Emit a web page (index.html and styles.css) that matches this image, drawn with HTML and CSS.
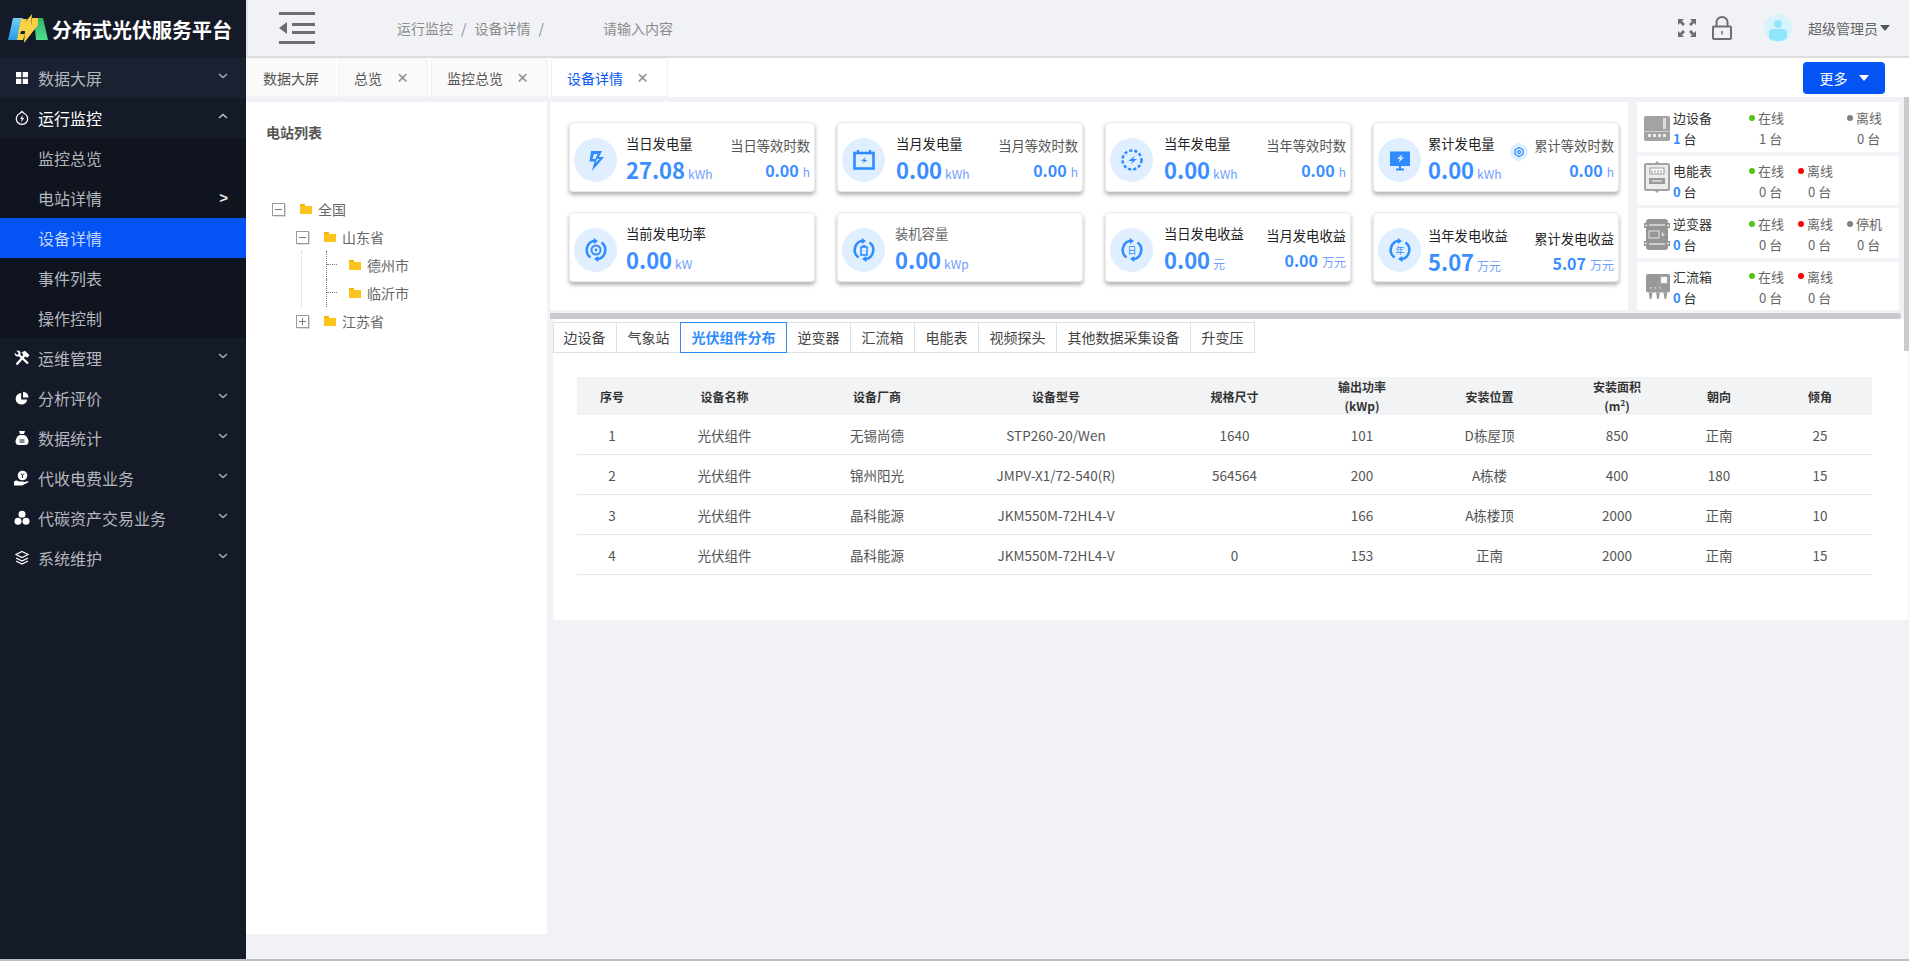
FILE: index.html
```html
<!DOCTYPE html>
<html lang="zh-CN">
<head>
    <meta charset="UTF-8">
    <title>分布式光伏服务平台</title>
    <link rel="stylesheet" href="styles.css">
</head>
<body>
<div class="app">

    <!-- Sidebar -->
    <aside class="sidebar">
        <div class="logo">
            <svg class="logo-icon" viewBox="0 0 40 30">
                <defs>
                    <linearGradient id="logoBlue" x1="0" y1="0" x2="0" y2="1"><stop offset="0" stop-color="#6fd0f5"/><stop offset="1" stop-color="#2b9be8"/></linearGradient>
                    <linearGradient id="logoGreen" x1="0" y1="0" x2="0" y2="1"><stop offset="0" stop-color="#2fb46a"/><stop offset="1" stop-color="#4fe08c"/></linearGradient>
                </defs>
                <polygon points="5,4 15,4 10,26 0,26" fill="url(#logoBlue)"/>
                <polygon points="26,4 35,4 40,26 28,26" fill="url(#logoGreen)"/>
                <polygon points="13,5 19,5 12,20 17,20 15,26 9,26" fill="#f7cf3f"/>
                <polygon points="24,0 10,17 17,17 16,29 30,11 23,11" fill="#f9d24a"/>
                <polygon points="24,4 30,4 30,11 23,11" fill="#f7cf3f"/>
            </svg>
            <span>分布式光伏服务平台</span>
        </div>
        <div class="menu-item first">
            <svg class="menu-icon" viewBox="0 0 16 16"><path d="M2 2h5.300v5.300H2zM8.700 2H14v5.300H8.700zM2 8.700h5.300V14H2zM8.700 8.700H14V14H8.700z" fill="#fff"/></svg>
            <span>数据大屏</span>
            <svg class="chevron" viewBox="0 0 10 6"><path d="M1 1l4 3.500L9 1" fill="none" stroke="#a9adb5" stroke-width="1.500"/></svg>
        </div>
        <div class="menu-item open">
            <svg class="menu-icon" viewBox="0 0 16 16"><path d="M8 1.500l2.200 2a5.700 5.700 0 1 1-4.400 0z" fill="none" stroke="#fff" stroke-width="1.300"/><path d="M9 4.800L6 9h1.800L7 12.500 10.200 8H8.300z" fill="#fff"/></svg>
            <span>运行监控</span>
            <svg class="chevron" viewBox="0 0 10 6"><path d="M1 5l4-3.500L9 5" fill="none" stroke="#c5c8ce" stroke-width="1.500"/></svg>
        </div>
        <div class="submenu">
            <div class="submenu-item">监控总览</div>
            <div class="submenu-item">电站详情<b class="sub-arrow">&gt;</b></div>
            <div class="submenu-item active">设备详情</div>
            <div class="submenu-item">事件列表</div>
            <div class="submenu-item">操作控制</div>
        </div>
        <div class="menu-item">
            <svg class="menu-icon" viewBox="0 0 16 16"><path d="M2.500 14.500L11 5" stroke="#fff" stroke-width="2.400" fill="none"/><path d="M7.500 2.500L11 .8l4.500 4.400-2.300 2.600-1.700-1.600-1 .8-2-2 .8-.8z" fill="#fff"/><path d="M5 5l9 8.500" stroke="#fff" stroke-width="2.400" fill="none"/><path d="M.8 2.800L3 5l1.800-1.800L2.600 1C4.300 0 6 .8 6.500 2.500c.3 1 0 2-.7 2.900-1 1-2.400 1.300-3.500.8C1 5.600.3 4.200.8 2.800z" fill="#fff"/></svg>
            <span>运维管理</span>
            <svg class="chevron" viewBox="0 0 10 6"><path d="M1 1l4 3.500L9 1" fill="none" stroke="#a9adb5" stroke-width="1.500"/></svg>
        </div>
        <div class="menu-item">
            <svg class="menu-icon" viewBox="0 0 16 16"><path d="M7.200 3a5.800 5.800 0 1 0 6 6.400H7.200z" fill="#fff"/><path d="M9 1.800a5.800 5.800 0 0 1 5.500 5.800H9z" fill="#fff"/></svg>
            <span>分析评价</span>
            <svg class="chevron" viewBox="0 0 10 6"><path d="M1 1l4 3.500L9 1" fill="none" stroke="#a9adb5" stroke-width="1.500"/></svg>
        </div>
        <div class="menu-item">
            <svg class="menu-icon" viewBox="0 0 16 16"><path d="M5 1h6L10 4H6z" fill="#fff"/><path d="M5.500 5h5c2.500 1.500 4 4 4 6.500 0 2.500-1.500 3.500-3 3.500h-7c-1.500 0-3-1-3-3.500 0-2.500 1.500-5 4-6.500z" fill="#fff"/><path d="M5.500 10h5M5.500 12h5" stroke="#141a27" stroke-width="1"/></svg>
            <span>数据统计</span>
            <svg class="chevron" viewBox="0 0 10 6"><path d="M1 1l4 3.500L9 1" fill="none" stroke="#a9adb5" stroke-width="1.500"/></svg>
        </div>
        <div class="menu-item">
            <svg class="menu-icon" viewBox="0 0 16 16"><circle cx="8.500" cy="5.500" r="4.800" fill="#fff"/><path d="M7 3.500l1.500 2 1.500-2M8.500 5.500v2.500" stroke="#141a27" fill="none"/><path d="M0 11.500c2-1.500 3.500-1 5 0h4c1 0 1 1.300 0 1.300h-2l6.500-1.500c1-.2 1.500.8.500 1.300L8 15.500H0z" fill="#fff"/></svg>
            <span>代收电费业务</span>
            <svg class="chevron" viewBox="0 0 10 6"><path d="M1 1l4 3.500L9 1" fill="none" stroke="#a9adb5" stroke-width="1.500"/></svg>
        </div>
        <div class="menu-item">
            <svg class="menu-icon" viewBox="0 0 16 16"><circle cx="8" cy="4.300" r="3.500" fill="#fff"/><circle cx="4" cy="11.300" r="3.500" fill="#fff"/><circle cx="12" cy="11.300" r="3.500" fill="#fff"/></svg>
            <span>代碳资产交易业务</span>
            <svg class="chevron" viewBox="0 0 10 6"><path d="M1 1l4 3.500L9 1" fill="none" stroke="#a9adb5" stroke-width="1.500"/></svg>
        </div>
        <div class="menu-item">
            <svg class="menu-icon" viewBox="0 0 16 16"><path d="M8 1.500l6 3-6 3-6-3z" fill="none" stroke="#fff" stroke-width="1.200"/><path d="M2 8l6 3 6-3M2 11l6 3 6-3" fill="none" stroke="#fff" stroke-width="1.200"/></svg>
            <span>系统维护</span>
            <svg class="chevron" viewBox="0 0 10 6"><path d="M1 1l4 3.500L9 1" fill="none" stroke="#a9adb5" stroke-width="1.500"/></svg>
        </div>
    </aside>

    <div class="main">

        <!-- Top bar -->
        <header class="topbar">
            <svg class="toggle" viewBox="0 0 36 32"><path d="M0 0h36v3H0zM13 11h23v3H13zM13 19h23v3H13zM0 29h36v3H0z" fill="#6d6d6d"/><path d="M8 10v12l-8-6z" fill="#6d6d6d"/></svg>
            <div class="crumbs">
                <span>运行监控</span><i>/</i><span>设备详情</span><i>/</i>
            </div>
            <span class="search-hint">请输入内容</span>
            <div class="topbar-right">
                <svg class="full-icon" viewBox="0 0 20 20"><path d="M1 1h6L5 3l3 3-2 2-3-3-2 2zM19 1v6l-2-2-3 3-2-2 3-3-2-2zM1 19v-6l2 2 3-3 2 2-3 3 2 2zM19 19h-6l2-2-3-3 2-2 3 3 2-2z" fill="#6f6f6f"/></svg>
                <svg class="lock-icon" viewBox="0 0 20 24"><path d="M4.500 11V6a5.500 5 0 0 1 11 0v5" fill="none" stroke="#6f6f6f" stroke-width="2"/><rect x="1" y="10.500" width="18" height="12.500" rx="1" fill="none" stroke="#6f6f6f" stroke-width="2"/><path d="M10 15v3.500" stroke="#6f6f6f" stroke-width="1.500"/></svg>
                <svg class="avatar" viewBox="0 0 28 28"><circle cx="14" cy="14" r="14" fill="#d8f3fb"/><circle cx="14" cy="10" r="4" fill="#90e6fd"/><path d="M5 24v-5c0-3 2-4 4-4h10c2 0 4 1 4 4v5a14 14 0 0 1-18 0z" fill="#90e6fd"/></svg>
                <span class="user">超级管理员</span>
                <i class="caret"></i>
            </div>
        </header>

        <!-- Tabs -->
        <nav class="tabs">
            <div class="tab first-tab">数据大屏</div>
            <div class="tab">总览<span class="close">×</span></div>
            <div class="tab">监控总览<span class="close">×</span></div>
            <div class="tab current">设备详情<span class="close">×</span></div>
            <button class="more">更多<i class="more-caret"></i></button>
        </nav>

        <div class="content">

            <!-- Station tree -->
            <section class="tree-panel">
                <h4>电站列表</h4>
                <ul class="tree">
                    <li>
                        <div class="node"><i class="box minus"></i><i class="folder"></i><span>全国</span></div>
                        <ul class="level">
                            <li>
                                <div class="node"><i class="box minus"></i><i class="folder"></i><span>山东省</span></div>
                                <ul class="leafs">
                                    <li class="leaf"><i class="folder"></i><span>德州市</span></li>
                                    <li class="leaf"><i class="folder"></i><span>临沂市</span></li>
                                </ul>
                            </li>
                            <li>
                                <div class="node"><i class="box plus"></i><i class="folder"></i><span>江苏省</span></div>
                            </li>
                        </ul>
                    </li>
                </ul>
            </section>

            <div class="detail">
                <div class="detail-top">

                    <!-- Stat cards -->
                    <section class="stats">
                        <div class="card">
                            <div class="round">
                                <svg viewBox="0 0 24 24"><path d="M7 3h11l-3 6h5L8 23l2.500-9.500H5.500z" fill="#2f8cff"/><path d="M10 6l-1.500 5h4.500l-1.500 4 4-4h-4l2-5z" fill="#e0efff"/></svg>
                            </div>
                            <div class="stat-main"><p class="stat-title">当日发电量</p><p class="stat-value">27.08<small>kWh</small></p></div>
                            <div class="stat-side"><p class="side-title">当日等效时数</p><p class="side-value">0.00<small>h</small></p></div>
                        </div>
                        <div class="card">
                            <div class="round">
                                <svg viewBox="0 0 24 24"><rect x="2.500" y="5" width="19" height="15.500" fill="none" stroke="#2f8cff" stroke-width="2.600"/><path d="M6 2v3M18 2v3" stroke="#2f8cff" stroke-width="2.200"/><path d="M14 9l-5 4h3l-1.500 2.500 5-3.500h-3z" fill="#2f8cff"/></svg>
                            </div>
                            <div class="stat-main wide"><p class="stat-title">当月发电量</p><p class="stat-value">0.00<small>kWh</small></p></div>
                            <div class="stat-side"><p class="side-title">当月等效时数</p><p class="side-value">0.00<small>h</small></p></div>
                        </div>
                        <div class="card">
                            <div class="round">
                                <svg viewBox="0 0 24 24"><circle cx="12" cy="12" r="9.500" fill="none" stroke="#2f8cff" stroke-width="2.500" stroke-dasharray="3.200 2"/><path d="M15 7.500l-6.500 5.500h4l-2 3.500 6.500-5.500h-4z" fill="#2f8cff"/></svg>
                            </div>
                            <div class="stat-main wide"><p class="stat-title">当年发电量</p><p class="stat-value">0.00<small>kWh</small></p></div>
                            <div class="stat-side"><p class="side-title">当年等效时数</p><p class="side-value">0.00<small>h</small></p></div>
                        </div>
                        <div class="card">
                            <div class="round">
                                <svg viewBox="0 0 24 24"><rect x="2" y="3.500" width="20" height="14.500" fill="#2f8cff"/><path d="M8 21.500h8M12 18v3.500" stroke="#2f8cff" stroke-width="2.200"/><path d="M14.500 6l-5.500 5h3l-1.500 3.500 5.500-5h-3z" fill="#e0efff"/></svg>
                            </div>
                            <div class="stat-main tight"><p class="stat-title">累计发电量</p><p class="stat-value">0.00<small>kWh</small></p></div>
                            <div class="round mini">
                                <svg viewBox="0 0 24 24"><path d="M12 3l8 4.500v9L12 21l-8-4.500v-9z" fill="none" stroke="#2f8cff" stroke-width="2.500"/><circle cx="12" cy="12" r="3" fill="none" stroke="#2f8cff" stroke-width="2.500"/></svg>
                            </div>
                            <div class="stat-side"><p class="side-title">累计等效时数</p><p class="side-value">0.00<small>h</small></p></div>
                        </div>
                        <div class="card">
                            <div class="round">
                                <svg viewBox="0 0 24 24"><path d="M12 2.800A9.200 9.200 0 0 0 6.500 19.400M12 21.200A9.200 9.200 0 0 0 17.500 4.600" fill="none" stroke="#2f8cff" stroke-width="2.500"/><path d="M9.500 0l4.500 3-4 3zM14.500 24L10 21l4-3z" fill="#2f8cff"/><circle cx="12" cy="12" r="4.500" fill="none" stroke="#2f8cff" stroke-width="2"/><circle cx="12" cy="12" r="1.400" fill="#2f8cff"/></svg>
                            </div>
                            <div class="stat-main"><p class="stat-title">当前发电功率</p><p class="stat-value">0.00<small>kW</small></p></div>
                        </div>
                        <div class="card">
                            <div class="round">
                                <svg viewBox="0 0 24 24"><path d="M12 2.800A9.200 9.200 0 0 0 6.500 19.400M12 21.200A9.200 9.200 0 0 0 17.500 4.600" fill="none" stroke="#2f8cff" stroke-width="2.500"/><path d="M9.500 0l4.500 3-4 3zM14.500 24L10 21l4-3z" fill="#2f8cff"/><rect x="9" y="9" width="6" height="8" fill="none" stroke="#2f8cff" stroke-width="1.600"/><path d="M10.500 7h3v2h-3z" fill="#2f8cff"/></svg>
                            </div>
                            <div class="stat-main shifted"><p class="stat-title muted">装机容量</p><p class="stat-value">0.00<small>kWp</small></p></div>
                        </div>
                        <div class="card">
                            <div class="round">
                                <svg viewBox="0 0 24 24"><path d="M12 2.800A9.200 9.200 0 0 0 6.500 19.400M12 21.200A9.200 9.200 0 0 0 17.500 4.600" fill="none" stroke="#2f8cff" stroke-width="2.500"/><path d="M9.500 0l4.500 3-4 3zM14.500 24L10 21l4-3z" fill="#2f8cff"/><text x="12" y="15.500" class="icon-text">日</text></svg>
                            </div>
                            <div class="stat-main wide"><p class="stat-title">当日发电收益</p><p class="stat-value">0.00<small>元</small></p></div>
                            <div class="stat-side"><p class="side-title dark">当月发电收益</p><p class="side-value">0.00<small>万元</small></p></div>
                        </div>
                        <div class="card">
                            <div class="round">
                                <svg viewBox="0 0 24 24"><path d="M12 2.800A9.200 9.200 0 0 0 6.500 19.400M12 21.200A9.200 9.200 0 0 0 17.500 4.600" fill="none" stroke="#2f8cff" stroke-width="2.500"/><path d="M9.500 0l4.500 3-4 3zM14.500 24L10 21l4-3z" fill="#2f8cff"/><text x="12" y="15.500" class="icon-text">年</text></svg>
                            </div>
                            <div class="stat-main tight lower"><p class="stat-title">当年发电收益</p><p class="stat-value">5.07<small>万元</small></p></div>
                            <div class="stat-side lowest"><p class="side-title dark">累计发电收益</p><p class="side-value">5.07<small>万元</small></p></div>
                        </div>
                    </section>

                    <!-- Device counts -->
                    <section class="devices">
                        <div class="device">
                            <svg class="device-icon" viewBox="0 0 26 25"><rect x="0" y="0" width="26" height="25" rx="2" fill="#a3a3a3"/><rect x="0" y="15" width="26" height="1" fill="#cfcfcf"/><rect x="19" y="2" width="3" height="11" fill="#dcdcdc"/><path d="M4 18h3v3H4zM9 18h3v3H9zM14 18h3v3h-3zM19 18h3v3h-3z" fill="#ececec"/></svg>
                            <div class="device-name"><p>边设备</p><p><b>1</b> 台</p></div>
                            <div class="state"><p><i class="dot green"></i>在线</p><p class="num">1 台</p></div>
                            <div class="state"></div>
                            <div class="state"><p><i class="dot gray"></i>离线</p><p class="num">0 台</p></div>
                        </div>
                        <div class="device">
                            <svg class="device-icon meter" viewBox="0 0 26 32"><path d="M13 0l3 3h-6zM10 29h6l-3 3z" fill="#a3a3a3"/><rect x="1" y="3" width="24" height="26" rx="1" fill="#ececec" stroke="#a3a3a3" stroke-width="2"/><rect x="6" y="7" width="14" height="6" fill="#fff" stroke="#999"/><path d="M8 9v3M11 9v3M14 9v3M17 9v3" stroke="#999"/><path d="M5 17h16v6H5z" fill="#999"/><path d="M8 20h10" stroke="#fff"/></svg>
                            <div class="device-name"><p>电能表</p><p><b>0</b> 台</p></div>
                            <div class="state"><p><i class="dot green"></i>在线</p><p class="num">0 台</p></div>
                            <div class="state"><p><i class="dot red"></i>离线</p><p class="num">0 台</p></div>
                            <div class="state"></div>
                        </div>
                        <div class="device">
                            <svg class="device-icon" viewBox="0 0 26 33"><rect x="2" y="1" width="22" height="31" rx="3" fill="#959595"/><path d="M0 5h4v5H0zM22 5h4v5h-4zM0 23h4v5H0zM22 23h4v5h-4z" fill="#959595"/><circle cx="2" cy="7.500" r="1" fill="#eee"/><circle cx="24" cy="7.500" r="1" fill="#eee"/><circle cx="2" cy="25.500" r="1" fill="#eee"/><circle cx="24" cy="25.500" r="1" fill="#eee"/><rect x="5" y="6" width="16" height="2" fill="#cdcdcd"/><rect x="5" y="25" width="16" height="2" fill="#cdcdcd"/><rect x="5" y="13" width="10" height="7" fill="none" stroke="#e6e6e6"/><path d="M19 13l-2 4h2l-1 3 3-4h-2z" fill="#e6e6e6"/></svg>
                            <div class="device-name"><p>逆变器</p><p><b>0</b> 台</p></div>
                            <div class="state"><p><i class="dot green"></i>在线</p><p class="num">0 台</p></div>
                            <div class="state"><p><i class="dot red"></i>离线</p><p class="num">0 台</p></div>
                            <div class="state"><p><i class="dot gray"></i>停机</p><p class="num">0 台</p></div>
                        </div>
                        <div class="device">
                            <svg class="device-icon box-icon" viewBox="0 0 26 28"><rect x="0" y="0" width="26" height="20" rx="2" fill="#999"/><rect x="16" y="3" width="7" height="7" fill="#f6f6f6"/><path d="M4 15h2M9 15h2M14 15h2" stroke="#dcdcdc" stroke-width="1.500"/><path d="M3 20h4l-1 7H4zM11 20h4l-1 7h-2zM19 20h4l-1 7h-2z" fill="#999"/></svg>
                            <div class="device-name"><p>汇流箱</p><p><b>0</b> 台</p></div>
                            <div class="state"><p><i class="dot green"></i>在线</p><p class="num">0 台</p></div>
                            <div class="state"><p><i class="dot red"></i>离线</p><p class="num">0 台</p></div>
                            <div class="state"></div>
                        </div>
                    </section>
                </div>

                <div class="hbar"></div>

                <!-- Device tabs and table -->
                <section class="device-panel">
                    <div class="kinds">
                        <div class="kind">边设备</div>
                        <div class="kind">气象站</div>
                        <div class="kind selected">光伏组件分布</div>
                        <div class="kind">逆变器</div>
                        <div class="kind">汇流箱</div>
                        <div class="kind">电能表</div>
                        <div class="kind">视频探头</div>
                        <div class="kind">其他数据采集设备</div>
                        <div class="kind">升变压</div>
                    </div>
                    <table class="device-table">
                        <thead>
                            <tr>
                                <th>序号</th><th>设备名称</th><th>设备厂商</th><th>设备型号</th><th>规格尺寸</th>
                                <th>输出功率<br>(kWp)</th><th>安装位置</th><th>安装面积<br>(m<sup>2</sup>)</th><th>朝向</th><th>倾角</th>
                            </tr>
                        </thead>
                        <tbody>
                            <tr><td>1</td><td>光伏组件</td><td>无锡尚德</td><td>STP260-20/Wen</td><td>1640</td><td>101</td><td>D栋屋顶</td><td>850</td><td>正南</td><td>25</td></tr>
                            <tr><td>2</td><td>光伏组件</td><td>锦州阳光</td><td>JMPV-X1/72-540(R)</td><td>564564</td><td>200</td><td>A栋楼</td><td>400</td><td>180</td><td>15</td></tr>
                            <tr><td>3</td><td>光伏组件</td><td>晶科能源</td><td>JKM550M-72HL4-V</td><td></td><td>166</td><td>A栋楼顶</td><td>2000</td><td>正南</td><td>10</td></tr>
                            <tr><td>4</td><td>光伏组件</td><td>晶科能源</td><td>JKM550M-72HL4-V</td><td>0</td><td>153</td><td>正南</td><td>2000</td><td>正南</td><td>15</td></tr>
                        </tbody>
                    </table>
                </section>
            </div>

            <div class="vbar"></div>
        </div>
    </div>
</div>
</body>
</html>
```

FILE: styles.css
```css
* {
    box-sizing: border-box;
}
html, body {
    margin: 0;
    height: 961px;
    overflow: hidden;
}
body {
    font-family: "Noto Sans CJK SC", "Noto Sans", sans-serif;
    font-size: 14px;
    color: #555;
    background-color: #f0f2f5;
}
p, ul, h4 {
    margin: 0;
    padding: 0;
}
ul {
    list-style: none;
}
i {
    font-style: normal;
}
.app {
    display: flex;
    height: 961px;
    border-bottom: 2px solid #b9bcc0;
}

/* sidebar */
.sidebar {
    width: 246px;
    flex: none;
    background-color: #141a27;
    color: #b4b7bd;
    font-size: 16px;
}
.logo {
    height: 58px;
    display: flex;
    align-items: center;
    padding-left: 8px;
    color: #fff;
    font-size: 20px;
    font-weight: bold;
}
.logo-icon {
    width: 40px;
    height: 30px;
    margin-right: 4px;
}
.menu-item {
    height: 40px;
    display: flex;
    align-items: center;
    padding-left: 14px;
    line-height: 40px;
}
.menu-item.first {
    background-color: #1a2130;
}
.menu-item.open {
    color: #fff;
}
.menu-icon {
    width: 16px;
    height: 16px;
    margin-right: 8px;
}
.chevron {
    width: 10px;
    height: 6px;
    margin-left: auto;
    margin-right: 18px;
    margin-top: -4px;
}
.submenu {
    background-color: #0f141f;
}
.submenu-item {
    height: 40px;
    line-height: 40px;
    padding-left: 38px;
    padding-right: 18px;
    display: flex;
    justify-content: space-between;
}
.submenu-item.active {
    background-color: #0353f5;
    color: #c3d6ff;
}
.sub-arrow {
    color: #e8e8e8;
    font-family: "Liberation Sans", sans-serif;
    font-size: 15px;
}

/* top bar */
.main {
    flex: 1;
    min-width: 0;
    display: flex;
    flex-direction: column;
}
.topbar {
    height: 58px;
    flex: none;
    display: flex;
    align-items: center;
    border-bottom: 2px solid #dcdcdc;
    border-left: 2px solid #e3e3e3;
    padding-left: 31px;
    color: #8c8c8c;
}
.toggle {
    width: 36px;
    height: 32px;
}
.crumbs {
    margin-left: 82px;
    display: flex;
    width: 206px;
}
.crumbs i {
    margin: 0 8px;
}
.search-hint {
    color: #8c8c8c;
}
.topbar-right {
    margin-left: auto;
    display: flex;
    align-items: center;
    color: #666;
    padding-right: 19px;
}
.full-icon {
    width: 20px;
    height: 20px;
}
.lock-icon {
    width: 20px;
    height: 24px;
    margin-left: 15px;
}
.avatar {
    width: 28px;
    height: 28px;
    margin-left: 32px;
}
.user {
    margin-left: 16px;
}
.caret {
    border-left: 5.5px solid transparent;
    border-right: 5.5px solid transparent;
    border-top: 6px solid #555;
    margin-left: 2px;
}

/* page tabs */
.tabs {
    height: 39px;
    flex: none;
    display: flex;
    background-color: #fff;
    padding-right: 24px;
    align-items: stretch;
}
.tab {
    background-color: #fafafa;
    margin-right: 3px;
    border-radius: 3px 3px 0 0;
    padding: 0 20px 0 16px;
    display: flex;
    align-items: center;
    width: 90px;
    white-space: nowrap;
    box-shadow: inset 0 0 0 1px #f2f2f2;
}
.tab:nth-child(3) {
    width: 117px;
}
.tab:nth-child(4) {
    width: 117px;
    background-color: #fff;
    color: #0a58f0;
}
.close {
    color: #8a8a8a;
    font-size: 19px;
    font-weight: 300;
    margin-left: auto;
    line-height: 20px;
    font-family: "Liberation Sans", sans-serif;
}
.first-tab {
    width: 89px;
    padding: 0 0 0 17px;
}
.more {
    margin: 4px 0 3px auto;
    width: 82px;
    background-color: #0353f5;
    border: none;
    border-radius: 4px;
    color: #fff;
    font-size: 14px;
    font-family: inherit;
    display: flex;
    align-items: center;
    justify-content: center;
}
.more-caret {
    border-left: 5px solid transparent;
    border-right: 5px solid transparent;
    border-top: 6px solid #fff;
    margin-left: 11px;
}

.content {
    flex: 1;
    display: flex;
    padding-top: 5px;
    position: relative;
}

/* tree */
.tree-panel {
    width: 301px;
    height: 832px;
    flex: none;
    background-color: #fff;
    padding: 20px 0 0 20px;
}
.tree-panel h4 {
    font-size: 14px;
    line-height: 20px;
    margin-bottom: 53px;
    color: #555;
}
.tree {
    margin-left: 6px;
    color: #666;
    line-height: 28px;
}
.node, .leaf {
    height: 28px;
    display: flex;
    align-items: center;
}
.box {
    width: 13px;
    height: 13px;
    border: 1px solid #9b9b9b;
    box-shadow: 1px 1px 0 #ddd;
    display: flex;
    align-items: center;
    justify-content: center;
    margin-right: 15px;
}
.box::before {
    content: "";
    width: 7px;
    height: 1px;
    background-color: #777;
}
.box.plus {
    background: linear-gradient(#777, #777) center / 1px 7px no-repeat;
}
.folder {
    width: 12px;
    height: 10px;
    margin-right: 6px;
    background: linear-gradient(#f7b500, #f7b500) 0 0 / 5px 2px no-repeat,
                linear-gradient(#fcc31f, #fcc31f) 0 2px / 100% 8px no-repeat;
}
.level {
    margin-left: 24px;
}
.leafs {
    margin-left: 5px;
    padding-left: 24px;
    border-left: 1px dotted #ccc;
}
.leafs .leaf {
    padding-left: 22px;
    border-left: 1px dotted #777;
    position: relative;
}
.leaf::before {
    content: "";
    position: absolute;
    left: 0;
    top: 13px;
    width: 10px;
    border-top: 1px dotted #777;
}

/* stats */
.detail {
    margin-left: 3px;
    width: 1358px;
    flex: none;
}
.detail-top {
    display: flex;
    height: 208px;
}
.stats {
    width: 1078px;
    flex: none;
    background-color: #fff;
    display: grid;
    grid-template-columns: repeat(4, 246px);
    grid-auto-rows: 70px;
    gap: 20px 22px;
    padding: 20px 0 0 19px;
}
.card {
    border: 1px solid #eaeaea;
    border-radius: 4px;
    box-shadow: 0 3px 4px rgba(0, 0, 0, .3);
    background-color: #fff;
    display: flex;
    align-items: flex-start;
    padding: 15px 4px 0 4px;
}
.round {
    width: 43px;
    height: 44px;
    flex: none;
    border-radius: 50%;
    background-color: #e0efff;
    display: flex;
    align-items: center;
    justify-content: center;
}
.round svg {
    width: 24px;
    height: 24px;
}
.round.mini {
    width: 18px;
    height: 18px;
    margin: 5px 0 0 auto;
}
.round.mini svg {
    width: 12px;
    height: 12px;
}
.icon-text {
    font-size: 9px;
    fill: #2f8cff;
    text-anchor: middle;
}
.stat-main {
    margin-left: 9px;
    margin-top: -4px;
}
.stat-main.wide {
    margin-left: 11px;
}
.stat-main.tight {
    margin-left: 7px;
}
.stat-main.shifted {
    margin-left: 10px;
}
.stat-main.lower {
    margin-top: -2px;
}
.stat-title {
    font-size: 13.3px;
    color: #222;
    line-height: 20px;
}
.stat-title.muted {
    color: #666;
}
.stat-value {
    font-size: 22px;
    font-weight: bold;
    color: #3a8eff;
    line-height: 31px;
}
.stat-value small {
    font-size: 12px;
    font-weight: normal;
    color: #6f9dff;
    margin-left: 3px;
}
.stat-side {
    margin-left: auto;
    margin-top: -2px;
    text-align: right;
}
.round.mini + .stat-side {
    margin-left: 6px;
}
.stat-side.lowest {
    margin-top: 1px;
}
.side-title {
    font-size: 13.3px;
    line-height: 20px;
    color: #555;
}
.side-title.dark {
    color: #222;
}
.side-value {
    font-size: 16px;
    font-weight: bold;
    color: #3a8eff;
    line-height: 28px;
}
.side-value small {
    font-size: 12px;
    font-weight: normal;
    color: #6f9dff;
    margin-left: 4px;
}

/* device counts */
.devices {
    margin-left: 9px;
    width: 262px;
    flex: none;
    display: grid;
    grid-template-rows: 50px 49px 50px 48px;
    gap: 3.5px;
}
.device {
    background-color: #fff;
    display: grid;
    grid-template-columns: 26px 79px 49px 49px 1fr;
    align-items: center;
    padding: 2px 0 0 7px;
    font-size: 13px;
    line-height: 21px;
}
.device-icon {
    width: 26px;
    height: auto;
}
.device-icon.meter {
    margin-top: -8px;
}
.box-icon {
    width: 24px;
    margin-left: 2px;
}
.device-name {
    color: #333;
    margin-left: 3px;
}
.device-name b {
    color: #2f8cff;
}
.state p {
    display: flex;
    align-items: center;
    color: #666;
}
.state .num {
    padding-left: 10px;
}
.dot {
    width: 6px;
    height: 6px;
    border-radius: 50%;
    margin-right: 3px;
}
.green {
    background-color: #52c41a;
}
.red {
    background-color: #f5050a;
}
.gray {
    background-color: #808080;
}

.hbar {
    margin: 3px 0 0 0;
    height: 6px;
    width: 1351px;
    background-color: #c8cacf;
    border-radius: 0 3px 3px 0;
}

/* device panel */
.device-panel {
    margin-left: 3px;
    height: 301px;
    background-color: #fff;
    padding: 3px 33px 0 0;
}
.kinds {
    display: flex;
    height: 31px;
    margin-bottom: 24px;
}
.kind {
    padding: 0 10.5px;
    border: 1px solid #dcdfe6;
    border-left: none;
    line-height: 29px;
    color: #444;
    white-space: nowrap;
}
.kind:first-child {
    border-left: 1px solid #dcdfe6;
    padding-left: 9.5px;
}
.kind.selected {
    border: 1px solid #2f8cff;
    color: #2f8cff;
    font-weight: bold;
    margin-left: -1px;
}
.device-table {
    width: 1295px;
    margin-left: 24px;
    border-collapse: separate;
    border-spacing: 0;
    table-layout: fixed;
    text-align: center;
}
.device-table th {
    height: 38px;
    padding: 0;
    background-color: #f2f3f5;
    font-size: 12px;
    line-height: 19px;
    color: #333;
}
.device-table sup {
    font-size: 8px;
    line-height: 0;
}
.device-table td {
    height: 40px;
    padding: 0;
    border-bottom: 1px solid #e8e8e8;
    color: #555;
    font-size: 13.5px;
}
.device-table th:nth-child(1) { width: 70px; }
.device-table th:nth-child(2) { width: 155px; }
.device-table th:nth-child(3) { width: 150px; }
.device-table th:nth-child(4) { width: 208px; }
.device-table th:nth-child(5) { width: 149px; }
.device-table th:nth-child(6) { width: 106px; }
.device-table th:nth-child(7) { width: 149px; }
.device-table th:nth-child(8) { width: 106px; }
.device-table th:nth-child(9) { width: 98px; }
.device-table th:nth-child(10) { width: 104px; }

.vbar {
    position: absolute;
    top: 0;
    right: 0;
    width: 5px;
    height: 254px;
    background-color: #c8cacf;
}
```
